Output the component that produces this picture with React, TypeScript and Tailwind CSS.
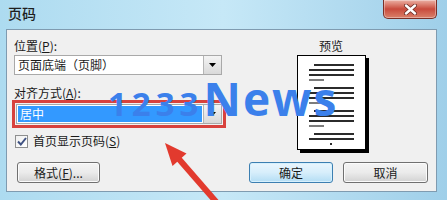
import React from 'react';

const cjk = "font-['Noto_Sans_CJK_SC',sans-serif]";

const Combo = ({ text, selected }: { text: string; selected?: boolean }) => (
  <div className="flex h-[20px] w-full items-stretch border border-[#a9a9a9] bg-white">
    <div className="flex flex-1 items-center p-[1px]">
      <div
        className={
          selected
            ? 'flex h-full w-full items-center bg-[#3399ff] pl-[2px] text-white'
            : 'flex h-full w-full items-center pl-[2px] text-[#1a1a1a]'
        }
      >
        <span className="text-[12px] leading-none">{text}</span>
      </div>
    </div>
    <div className="flex w-[18px] items-center justify-center border-l border-[#b5b5b5] bg-linear-to-b from-[#f4f4f4] to-[#d9d9d9]">
      <svg width="7" height="4" viewBox="0 0 7 4">
        <path d="M0 0 H7 L3.5 4 Z" fill="#000" />
      </svg>
    </div>
  </div>
);

const Btn = ({ children, primary, w }: { children: React.ReactNode; primary?: boolean; w: string }) => (
  <div
    className={`${w} flex h-[21px] items-center justify-center rounded-[3px] border text-[12px] text-[#1a1a1a] ${
      primary
        ? 'border-[#3c7fb1] bg-linear-to-b from-[#eaf6fd] via-[#d7eefb] to-[#b3ddf4] shadow-[inset_0_0_0_1px_#d6f0fd]'
        : 'border-[#707070] bg-linear-to-b from-[#f4f4f4] via-[#ebebeb] to-[#d2d2d2] shadow-[inset_0_0_0_1px_#fbfbfb]'
    }`}
  >
    {children}
  </div>
);

const Lines = ({ rows }: { rows: ('i' | 'f' | 's')[] }) => (
  <div className="flex flex-col gap-[3px]">
    {rows.map((r, i) => (
      <div
        key={i}
        className={
          r === 'i'
            ? 'ml-[5px] h-[2px] bg-[#2b2b2b]'
            : r === 'f'
            ? 'h-[2px] bg-[#2b2b2b]'
            : 'h-[2px] w-[15px] bg-[#7c7c7c]'
        }
      />
    ))}
  </div>
);

export default function App() {
  return (
    <div
      className={`relative flex h-[200px] w-[447px] flex-col overflow-hidden bg-linear-to-r from-[#addbf0] via-[#c6e8f7] to-[#9fcfe9] ${cjk}`}
    >
      {/* title bar */}
      <div className="flex h-[29px] items-start justify-between pl-[8px] pr-[10px]">
        <span className="pt-[4px] text-[14px] font-medium leading-[18px] text-[#1e1e1e]">页码</span>
        <div className="flex h-[19px] w-[54px] items-center justify-center rounded-b-[5px] border border-t-0 border-[#7a3027] bg-linear-to-b from-[#eab0a4] via-[#c84a3c] to-[#d9806a] shadow-[inset_0_0_0_1px_rgba(255,255,255,0.35)]">
          <svg width="13" height="11" viewBox="0 0 13 11">
            <path d="M2 1.5 L11 9.5 M11 1.5 L2 9.5" stroke="#6b2a22" strokeWidth="4" strokeLinecap="round" />
            <path d="M2 1.5 L11 9.5 M11 1.5 L2 9.5" stroke="#fff" strokeWidth="2.4" strokeLinecap="round" />
          </svg>
        </div>
      </div>

      {/* dialog body */}
      <div className="ml-[6px] mr-[10px] flex h-[163px] flex-col border border-[#7f9bb0] bg-[#f0f0f0] pl-[7px] pt-[8px]">
        <div className="flex">
          {/* left column */}
          <div className="flex w-[212px] flex-col">
            <div className="text-[12px] leading-[16px] text-[#1a1a1a]">
              位置(<span className="underline">P</span>):
            </div>
            <div className="mt-[1px] w-[208px]">
              <Combo text="页面底端（页脚）" />
            </div>
            <div className="mt-[11px] text-[12px] leading-[14px] text-[#1a1a1a]">
              对齐方式(<span className="underline">A</span>):
            </div>
            <div className="-ml-[2px] w-[214px] border-[3px] border-[#d8423d] p-[1px]">
              <Combo text="居中" selected />
            </div>
            <div className="ml-[1px] mt-[6px] flex h-[14px] items-center gap-[5px]">
              <div className="flex h-[13px] w-[13px] items-center justify-center border border-[#8e8f8f] bg-linear-to-br from-[#f0f0f0] to-[#ffffff]">
                <svg width="10" height="9" viewBox="0 0 10 9">
                  <path d="M1 4.5 L3.8 7.5 L9 1" stroke="#3f5282" strokeWidth="2" fill="none" />
                </svg>
              </div>
              <span className="text-[12px] leading-none text-[#1a1a1a]">
                首页显示页码(<span className="underline">S</span>)
              </span>
            </div>
          </div>

          {/* preview column */}
          <div className="flex flex-1 flex-col items-center">
            <div className="text-[12px] leading-[16px] text-[#1a1a1a]">预览</div>
            <div className="mt-[1px] flex h-[95px] w-[69px] flex-col gap-[6px] border border-black bg-white px-[11px] pt-[8px] shadow-[3px_3px_0_#000]">
              <Lines rows={['i', 'f', 'f', 's']} />
              <Lines rows={['i', 'f', 'f', 's']} />
              <Lines rows={['i', 'f', 'f', 's']} />
              <div className="flex flex-col items-center gap-[3px]">
                <div className="ml-[5px] h-[2px] w-[40px] self-end bg-[#2b2b2b]" />
                <div className="h-[2px] w-full bg-[#2b2b2b]" />
                <div className="h-[2px] w-[2px] bg-[#2b2b2b]" />
              </div>
            </div>
          </div>
        </div>

        {/* buttons */}
        <div className="ml-[3px] mr-[8px] mt-[12px] flex items-center">
          <Btn w="w-[83px]">
            格式(<span className="underline">F</span>)...
          </Btn>
          <div className="ml-auto flex gap-[10px]">
            <Btn w="w-[84px]" primary>
              确定
            </Btn>
            <Btn w="w-[85px]">取消</Btn>
          </div>
        </div>
      </div>

      {/* watermark */}
      <div className="pointer-events-none absolute left-[108px] top-[75px] flex items-baseline font-['Open_Sans',sans-serif] font-bold leading-none text-[#3b80eb]">
        <span className="text-[33px] tracking-[5px]">1233</span>
        <span className="text-[46px] tracking-[2px]">News</span>
      </div>

      {/* red arrow annotation */}
      <svg className="pointer-events-none absolute left-0 top-0" width="447" height="200" viewBox="0 0 447 200">
        <path d="M218 204 L178 158" stroke="#e23a2e" strokeWidth="6" />
        <path d="M165 143 L186.5 153.5 L172.5 166 Z" fill="#e23a2e" />
      </svg>
    </div>
  );
}
